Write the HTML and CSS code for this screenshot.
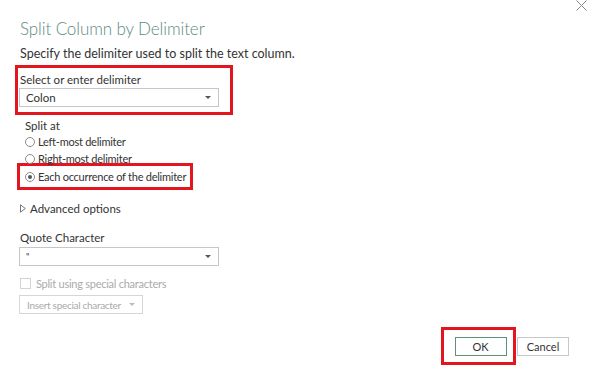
FILE: index.html
```html
<!DOCTYPE html>
<html lang="en">
  <head>
    <meta charset="UTF-8" />
    <title>Split Column by Delimiter</title>
    <link rel="stylesheet" href="styles.css">
  </head>
  <body>
    <div class="dialog">
      <button class="close" aria-label="Close">
        <svg width="11" height="11" viewBox="0 0 11 11"><path d="M0.5 0.5 L10.5 10.5 M10.5 0.5 L0.5 10.5" stroke="#8a8a8a" stroke-width="1" fill="none"/></svg>
      </button>

      <h1 class="title">Split Column by Delimiter</h1>
      <p class="desc">Specify the delimiter used to split the text column.</p>

      <div class="mark mark-delim">
        <label class="field-label">Select or enter delimiter</label>
        <div class="select">
          <span>Colon</span>
          <span class="caret"></span>
        </div>
      </div>

      <div class="split-at">
        <div class="field-label">Split at</div>
        <div class="radio"><span class="dot"></span>Left-most delimiter</div>
        <div class="radio"><span class="dot"></span>Right-most delimiter</div>
      </div>
      <div class="mark mark-each">
        <div class="radio"><span class="dot checked"></span>Each occurrence of the delimiter</div>
      </div>

      <div class="advanced">
        <svg class="tri" width="6" height="9" viewBox="0 0 6 9"><path d="M0.5 0.8 L5.3 4.5 L0.5 8.2 Z" stroke="#777" stroke-width="1" fill="none"/></svg>
        Advanced options
      </div>

      <div class="quote">
        <label class="field-label">Quote Character</label>
        <div class="select">
          <span class="quote-char">"</span>
          <span class="caret"></span>
        </div>
      </div>

      <div class="check disabled"><span class="box"></span>Split using special characters</div>
      <div class="insert disabled">Insert special character <span class="caret light"></span></div>

      <div class="footer">
        <div class="mark mark-ok">
          <button class="btn btn-ok">OK</button>
        </div>
        <button class="btn">Cancel</button>
      </div>
    </div>
  </body>
</html>
```

FILE: styles.css
```css
body {
  margin: 0;
  background: #fff;
  font-family: Lato, "Noto Sans", sans-serif;
  font-size: 11.5px;
  color: #333;
}

.dialog {
  position: relative;
  width: 590px;
  height: 377px;
  box-sizing: border-box;
  padding: 0 21px 0 20px;
}

.close {
  position: absolute;
  top: 0;
  right: 3px;
  border: none;
  background: none;
  padding: 0;
  line-height: 0;
}

.title {
  margin: 0;
  padding-top: 17px;
  font-size: 17px;
  font-weight: 300;
  line-height: 24px;
  letter-spacing: -0.1px;
  color: #5c8a7f;
}

.desc {
  margin: 5px 0 0;
  font-size: 12.5px;
  line-height: 16px;
  color: #333;
}

.field-label {
  display: block;
  line-height: 13px;
}

.mark {
  border: 3px solid #e3151e;
}

.mark-delim {
  width: 210px;
  height: 39px;
  margin: 3px 0 0 -5px;
  padding: 5px 0 0 2px;
  box-sizing: content-box;
}

.select {
  display: flex;
  align-items: center;
  justify-content: space-between;
  width: 185px;
  height: 17px;
  margin-top: 2px;
  margin-left: -1px;
  padding: 0 7px 0 6px;
  box-sizing: content-box;
  border: 1px solid #c6c6c6;
  background: #fff;
  line-height: 17px;
}

.caret {
  width: 0;
  height: 0;
  border-left: 3px solid transparent;
  border-right: 3px solid transparent;
  border-top: 3px solid #555;
}

.caret.light {
  border-top-color: #bbb;
  margin-left: 8px;
}

.split-at {
  margin: 3px 0 0 5px;
}

.split-at .field-label {
  line-height: 15px;
}

.radio {
  display: flex;
  align-items: center;
  height: 17px;
  white-space: nowrap;
  font-size: 11px;
  letter-spacing: -0.25px;
}

.dot {
  width: 8px;
  height: 8px;
  margin-right: 3px;
  border: 1px solid #8c8c8c;
  border-radius: 50%;
  position: relative;
}

.dot.checked::after {
  content: "";
  position: absolute;
  top: 2px;
  left: 2px;
  width: 4px;
  height: 4px;
  border-radius: 50%;
  background: #555;
}

.mark-each {
  width: 176px;
  height: 27px;
  margin: -4px 0 0 -3px;
  padding: 0 0 0 5px;
  box-sizing: border-box;
  display: flex;
  align-items: center;
}

.advanced {
  display: flex;
  align-items: center;
  margin-top: 11px;
  line-height: 15px;
}

.tri {
  margin: 0 4px 0 0;
}

.quote {
  margin-top: 15px;
}

.quote .select {
  margin-top: 3px;
}

.quote-char {
  font-size: 9px;
}

.disabled {
  color: #aaa;
}

.check {
  display: flex;
  align-items: center;
  margin-top: 10px;
  line-height: 15px;
  font-size: 11px;
  letter-spacing: -0.25px;
}

.box {
  width: 9px;
  height: 9px;
  margin-right: 5px;
  border: 1px solid #d3d3d3;
}

.insert {
  display: inline-flex;
  align-items: center;
  margin: 4px 0 0 -1px;
  height: 17px;
  padding: 0 7px 0 7px;
  border: 1px solid #d6d6d6;
  font-size: 10px;
  letter-spacing: -0.3px;
}

.footer {
  display: flex;
  justify-content: flex-end;
  align-items: center;
  margin-top: 13px;
}

.mark-ok {
  width: 69px;
  height: 32px;
  padding: 0;
  margin-right: 1px;
  display: flex;
  align-items: center;
  justify-content: center;
}

.btn {
  width: 52px;
  height: 19px;
  padding: 0;
  background: #fff;
  border: 1px solid #c8c8c8;
  font-family: inherit;
  font-size: 11px;
  color: #333;
}

.btn-ok {
  margin-left: 4px;
  border-color: #5e9078;
}
```
